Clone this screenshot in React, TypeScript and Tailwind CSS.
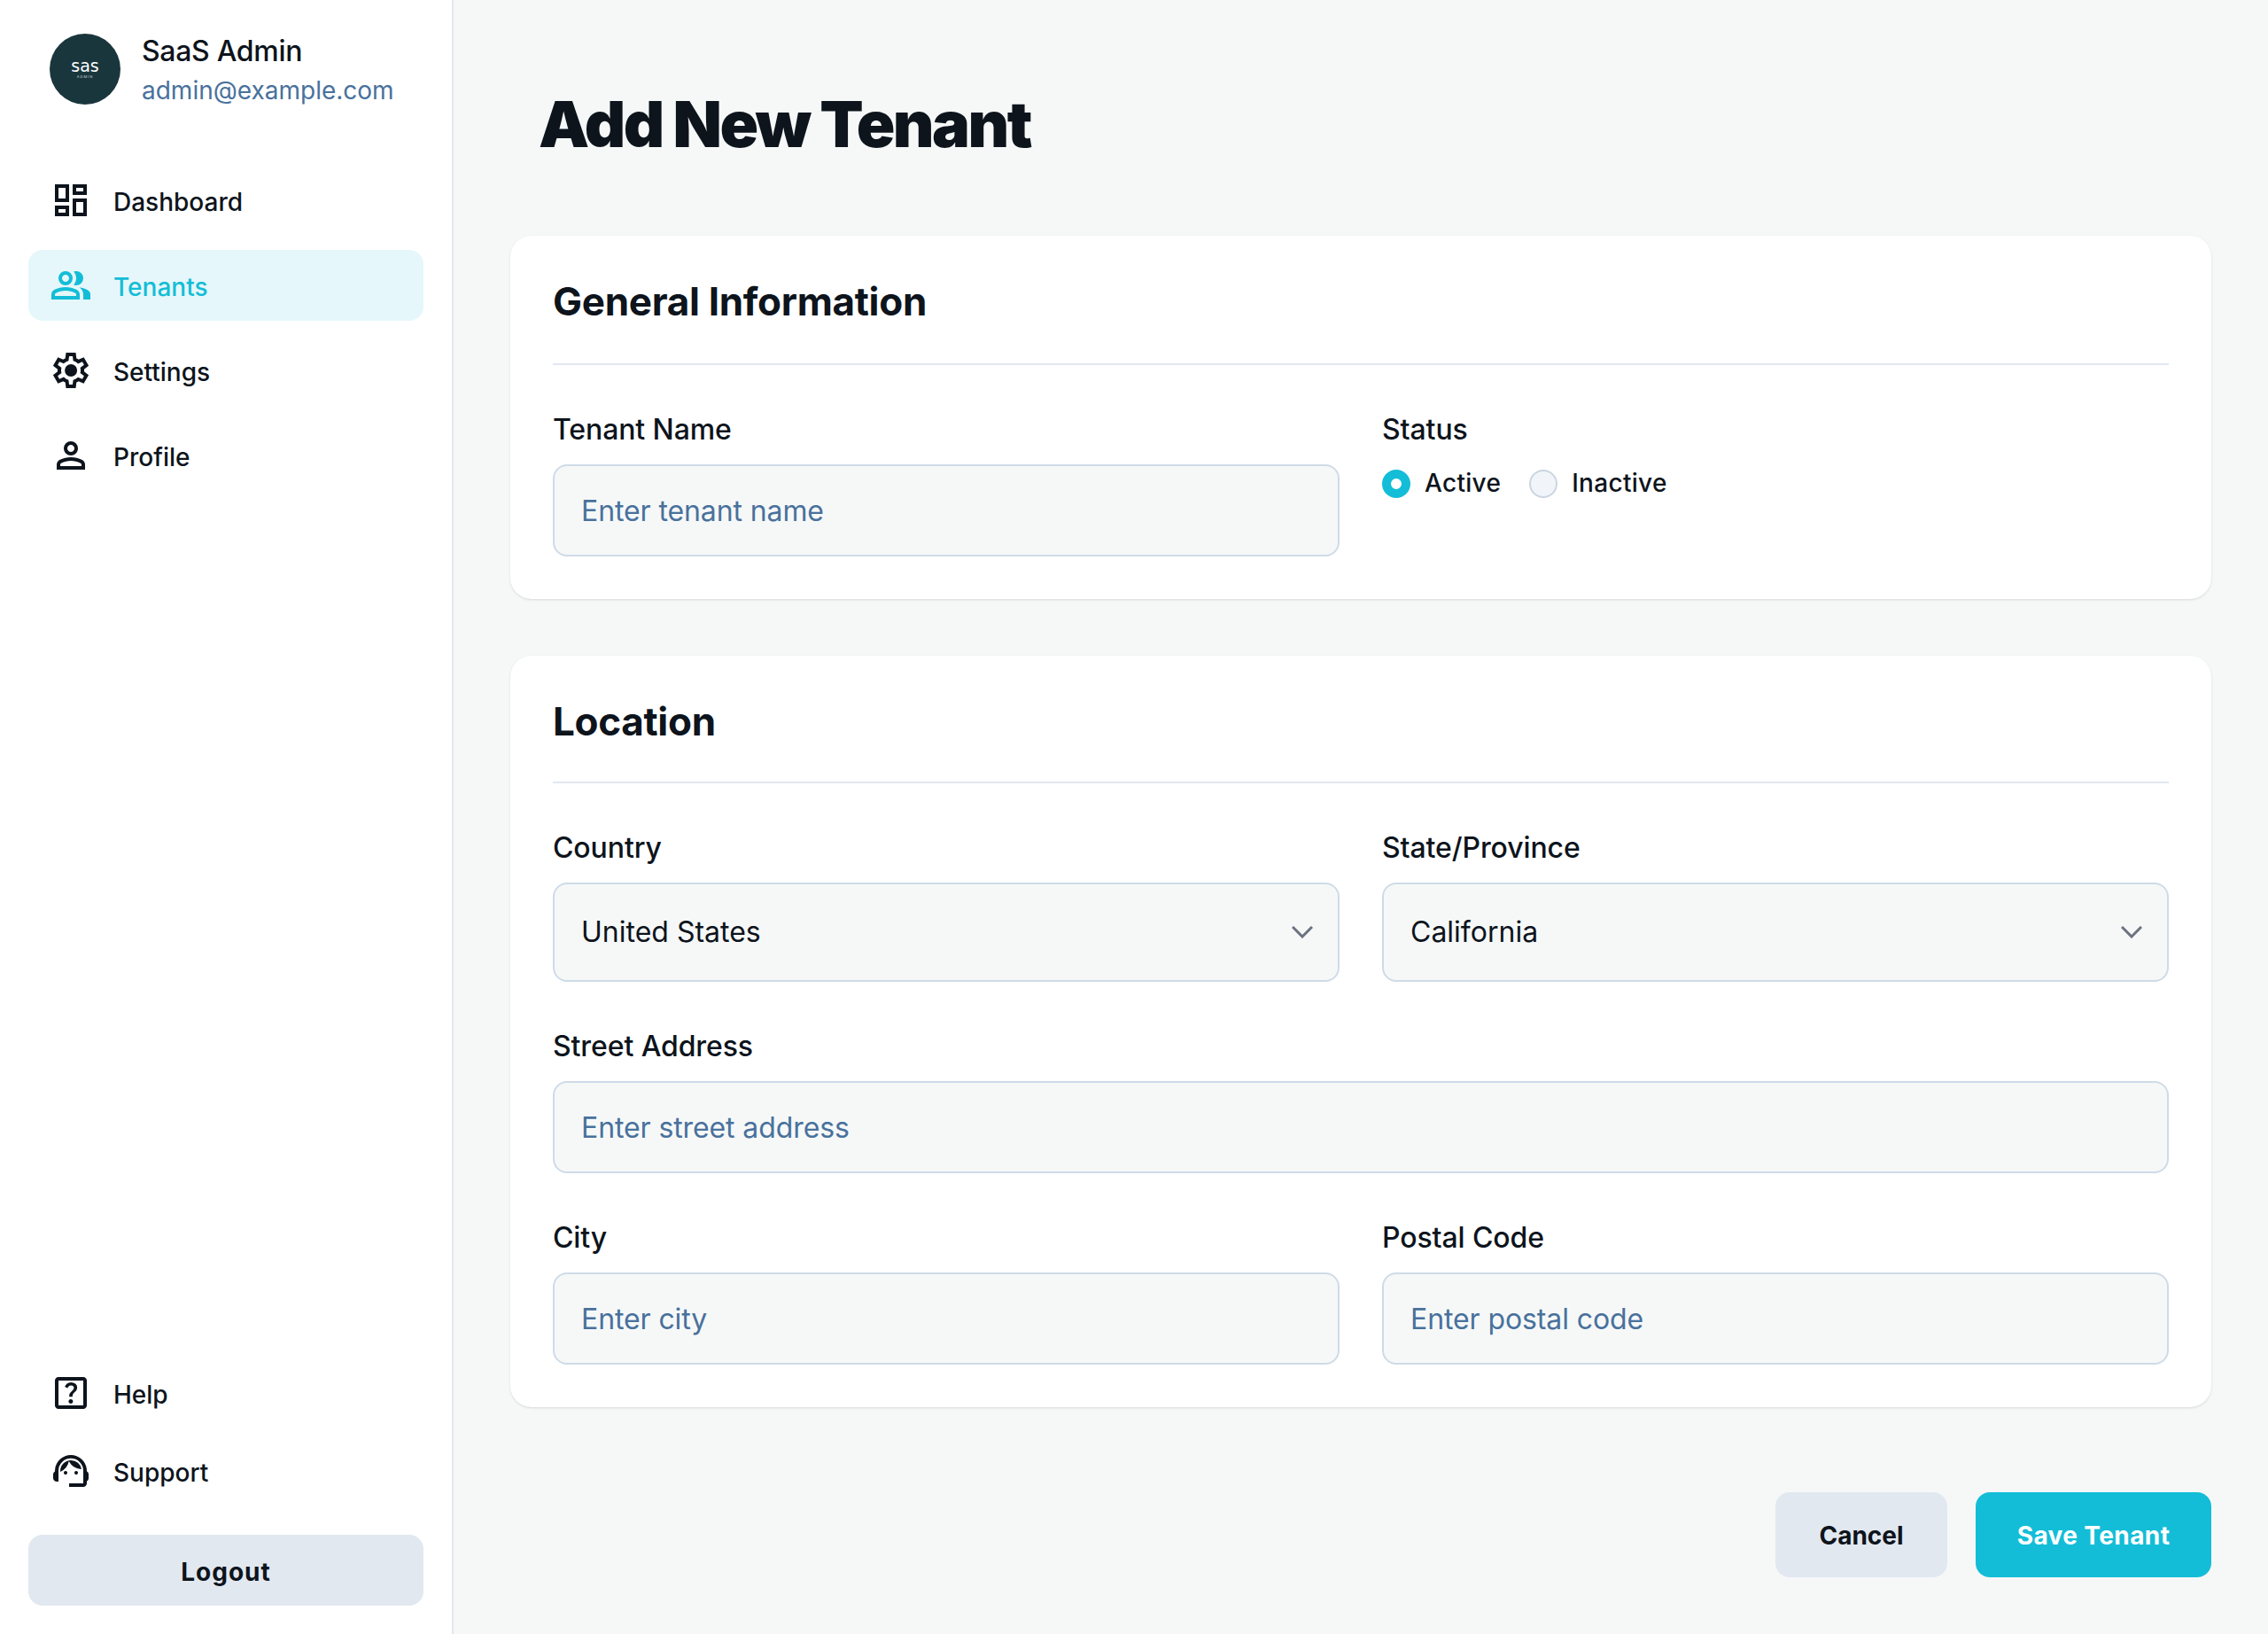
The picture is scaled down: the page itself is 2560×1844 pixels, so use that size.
const ICONS = {
  dashboard:
    'M520-600v-240h320v240H520ZM120-440v-400h320v400H120Zm400 320v-400h320v400H520Zm-400 0v-240h320v240H120Zm80-400h160v-240H200v240Zm400 320h160v-240H600v240Zm0-480h160v-80H600v80ZM200-200h160v-80H200v80Z',
  group:
    'M40-160v-112q0-34 17.5-62.5T104-378q62-31 126-46.5T360-440q66 0 130 15.5T616-378q29 15 46.5 43.5T680-272v112H40Zm720 0v-120q0-44-24.5-84.5T666-434q51 6 96 20.5t84 35.5q36 20 55 44.5t19 53.5v120H760ZM360-480q-66 0-113-47t-47-113q0-66 47-113t113-47q66 0 113 47t47 113q0 66-47 113t-113 47Zm400-160q0 66-47 113t-113 47q-11 0-28-2.5t-28-5.5q27-32 41.5-71t14.5-81q0-42-14.5-81T544-792q14-5 28-6.5t28-1.5q66 0 113 47t47 113ZM120-240h480v-32q0-11-5.5-20T580-306q-54-27-109-40.5T360-360q-56 0-111 13.5T140-306q-9 5-14.5 14t-5.5 20v32Zm240-320q33 0 56.5-23.5T440-640q0-33-23.5-56.5T360-720q-33 0-56.5 23.5T280-640q0 33 23.5 56.5T360-560Z',
  settings:
    'm370-80-16-128q-13-5-24.5-12T307-235l-119 50L78-375l103-78q-1-7-1-13.5v-27q0-6.5 1-13.5L78-585l110-190 119 50q11-8 23-15t24-12l16-128h220l16 128q13 5 24.5 12t22.5 15l119-50 110 190-103 78q1 7 1 13.5v27q0 6.5-2 13.5l103 78-110 190-118-50q-11 8-23 15t-24 12L590-80H370Zm70-80h79l14-106q31-8 57.5-23.5T639-327l99 41 39-68-86-65q5-14 7-29.5t2-31.5q0-16-2-31.5t-7-29.5l86-65-39-68-99 42q-22-23-48.5-38.5T533-694l-13-106h-79l-14 106q-31 8-57.5 23.5T321-633l-99-41-39 68 86 64q-5 15-7 30t-2 32q0 16 2 31t7 30l-86 65 39 68 99-42q22 23 48.5 38.5T427-266l13 106Zm42-180q58 0 99-41t41-99q0-58-41-99t-99-41q-59 0-99.5 41T342-480q0 58 40.5 99t99.5 41Z',
  person:
    'M480-480q-66 0-113-47t-47-113q0-66 47-113t113-47q66 0 113 47t47 113q0 66-47 113t-113 47ZM160-160v-112q0-34 17.5-62.5T224-378q62-31 126-46.5T480-440q66 0 130 15.5T736-378q29 15 46.5 43.5T800-272v112H160Zm80-80h480v-32q0-11-5.5-20T700-306q-54-27-109-40.5T480-360q-56 0-111 13.5T260-306q-9 5-14.5 14t-5.5 20v32Zm240-320q33 0 56.5-23.5T560-640q0-33-23.5-56.5T480-720q-33 0-56.5 23.5T400-640q0 33 23.5 56.5T480-560Z',
  help:
    'M200-120q-33 0-56.5-23.5T120-200v-560q0-33 23.5-56.5T200-840h560q33 0 56.5 23.5T840-760v560q0 33-23.5 56.5T760-120H200Zm0-80h560v-560H200v560ZM478-240q21 0 35.5-14.5T528-290q0-21-14.5-35.5T478-340q-21 0-35.5 14.5T428-290q0 21 14.5 35.5T478-240Zm-36-154h74q0-33 7.5-52t42.5-52q26-26 41-49.5t15-56.5q0-56-41-86t-97-30q-57 0-92.5 30T342-618l66 26q5-18 22.5-39t53.5-21q32 0 48 17.5t16 38.5q0 20-12 37.5T506-526q-44 39-54 59t-10 73Z',
  support:
    'M440-120v-80h320v-284q0-117-81.5-198.5T480-764q-117 0-198.5 81.5T200-484v244h-40q-33 0-56.5-23.5T80-320v-80q0-21 10.5-39.5T120-469l3-53q8-68 39.5-126t79-101q47.5-43 109-67T480-840q68 0 129 24t109 66.5Q766-707 797-649t40 126l3 52q19 9 29.5 27t10.5 38v92q0 20-10.5 38T840-249v49q0 33-23.5 56.5T760-120H440Zm-80-280q-17 0-28.5-11.5T320-440q0-17 11.5-28.5T360-480q17 0 28.5 11.5T400-440q0 17-11.5 28.5T360-400Zm240 0q-17 0-28.5-11.5T560-440q0-17 11.5-28.5T600-480q17 0 28.5 11.5T640-440q0 17-11.5 28.5T600-400Zm-359-62q-7-106 64-182t177-76q89 0 156.5 56.5T720-519q-91-1-167.5-49T435-698q-16 80-67.5 142.5T241-462Z',
};

type IconName = keyof typeof ICONS;

function NavItem({ icon, label, active }: { icon: IconName; label: string; active?: boolean }) {
  return (
    <a
      className={`flex h-20 items-center gap-6 rounded-[16px] px-6 text-[28px] font-medium ${
        active ? 'bg-[#e5f7fa] text-[#13bdd7]' : 'text-[#0d141c]'
      }`}
    >
      <svg viewBox="0 -960 960 960" className="h-12 w-12 shrink-0" fill="currentColor" fillRule="evenodd">
        <path d={ICONS[icon]} />
      </svg>
      <span className="pt-[3px]">{label}</span>
    </a>
  );
}

const labelClass = 'mb-[15px] pt-px text-[32px] leading-[48px] font-medium tracking-[-0.1px] text-[#0d141c]';

function Field({ label, placeholder }: { label: string; placeholder: string }) {
  return (
    <label className="block flex-1">
      <div className={labelClass}>{label}</div>
      <input
        placeholder={placeholder}
        className="block h-[104px] w-full rounded-[16px] border-2 border-[#cedbe8] bg-[#f6f8f8] px-[30px] pt-px text-[32px] tracking-[-0.1px] text-[#0d141c] outline-none placeholder:text-[#49719c]"
      />
    </label>
  );
}

function SelectField({ label, value }: { label: string; value: string }) {
  return (
    <div className="flex-1">
      <div className={labelClass}>{label}</div>
      <div className="flex h-[112px] items-center justify-between rounded-[16px] border-2 border-[#cedbe8] bg-[#f6f8f8] pr-[28px] pl-[30px] text-[32px] text-[#0d141c]">
        {value}
        <svg viewBox="0 0 24 14" className="h-[14px] w-6" fill="none" stroke="#6b7280" strokeWidth="3">
          <path d="M1 1l11 11L23 1" />
        </svg>
      </div>
    </div>
  );
}

function Section({ title, headClass, children }: { title: string; headClass: string; children: React.ReactNode }) {
  return (
    <section className="rounded-[24px] bg-white p-12 shadow-sm">
      <h2
        className={`mb-12 border-b-2 border-[#e2e8f0] text-[44px] leading-[52px] font-bold tracking-[-0.3px] text-[#0d141c] ${headClass}`}
      >
        {title}
      </h2>
      {children}
    </section>
  );
}

export default function App() {
  return (
    <div className="flex min-h-screen bg-[#f6f8f8] font-['Inter',sans-serif]">
      <aside className="flex w-[512px] shrink-0 flex-col justify-between border-r-2 border-[#e2e8f0] bg-white p-8">
        <div>
          <div className="mb-[62px] flex h-[92px] items-center gap-6 pl-6">
            <div className="flex h-20 w-20 shrink-0 flex-col items-center justify-center rounded-full bg-[#1a363d] pb-[2px] text-white">
              <span className="font-['DejaVu_Sans',sans-serif] text-[19px] leading-[20px]">sas</span>
              <span className="text-[4px] leading-[6px] tracking-[1px] text-gray-300">ADMIN</span>
            </div>
            <div>
              <div className="text-[32px] leading-[48px] font-medium tracking-[-0.3px] text-[#0d141c]">SaaS Admin</div>
              <div className="text-[28px] leading-[40px] text-[#49719c]">admin@example.com</div>
            </div>
          </div>
          <nav className="flex flex-col gap-4">
            <NavItem icon="dashboard" label="Dashboard" />
            <NavItem icon="group" label="Tenants" active />
            <NavItem icon="settings" label="Settings" />
            <NavItem icon="person" label="Profile" />
          </nav>
        </div>
        <div>
          <div className="mb-8 flex flex-col gap-2">
            <NavItem icon="help" label="Help" />
            <NavItem icon="support" label="Support" />
          </div>
          <button className="h-20 w-full rounded-[16px] bg-[#e2e8f0] pt-[3px] text-[28px] font-bold tracking-[1px] text-[#0d141c]">
            Logout
          </button>
        </div>
      </aside>

      <main className="flex-1 px-16 pt-[100px] pb-16">
        <h1 className="mb-[86px] px-8 text-[72px] leading-[80px] font-black tracking-[-2.5px] text-[#0d141c]">
          Add New Tenant
        </h1>

        <div className="flex flex-col gap-16">
          <Section title="General Information" headClass="pb-11">
            <div className="flex gap-12">
              <Field label="Tenant Name" placeholder="Enter tenant name" />
              <div className="flex-1">
                <div className={labelClass}>Status</div>
                <div className="flex items-center gap-8 text-[28px] font-medium tracking-[0.3px] text-[#0d141c]">
                  <div className="flex items-center gap-4">
                    <span className="h-8 w-8 rounded-full border-[10px] border-[#13bdd7] bg-white" />
                    <span className="pb-[2px]">Active</span>
                  </div>
                  <div className="flex items-center gap-4">
                    <span className="h-8 w-8 rounded-full border-2 border-[#cbd5e1] bg-[#f1f5f9]" />
                    <span className="pb-[2px]">Inactive</span>
                  </div>
                </div>
              </div>
            </div>
          </Section>

          <Section title="Location" headClass="pb-[42px]">
            <div className="flex flex-col gap-12">
              <div className="flex gap-12">
                <SelectField label="Country" value="United States" />
                <SelectField label="State/Province" value="California" />
              </div>
              <Field label="Street Address" placeholder="Enter street address" />
              <div className="flex gap-12">
                <Field label="City" placeholder="Enter city" />
                <Field label="Postal Code" placeholder="Enter postal code" />
              </div>
            </div>
          </Section>
        </div>

        <div className="mt-24 flex justify-end gap-8">
          <button className="h-24 w-[194px] rounded-[16px] bg-[#e2e8f0] pt-[2px] text-[28px] font-bold text-[#0d141c]">
            Cancel
          </button>
          <button className="h-24 w-[266px] rounded-[16px] bg-[#13bdd7] pt-[2px] text-[28px] font-bold tracking-[0.4px] text-white">
            Save Tenant
          </button>
        </div>
      </main>
    </div>
  );
}
